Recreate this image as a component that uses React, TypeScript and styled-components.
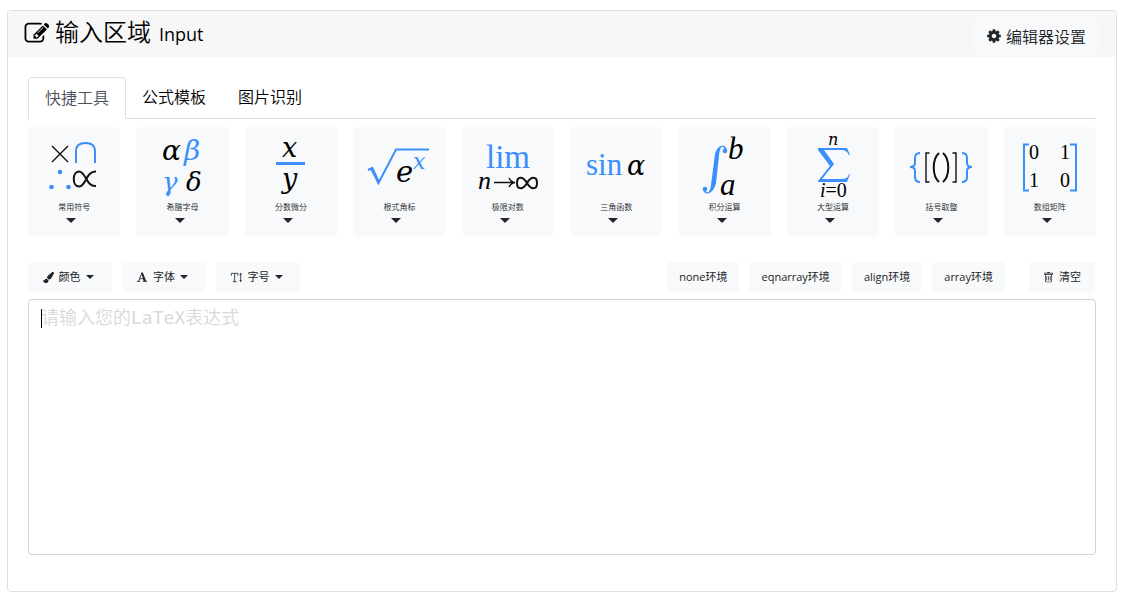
import React from 'react';
import styled, { createGlobalStyle } from 'styled-components';
import { FaPaintBrush } from 'react-icons/fa';
import { BsTrash } from 'react-icons/bs';

const blue = '#3b8ffb';

const GlobalStyle = createGlobalStyle`
  *, *::before, *::after { box-sizing: border-box; }
  body {
    margin: 0;
    padding: 10px 5px 8px 7px;
    background: #fff;
    color: #000;
    font-family: "Open Sans", "Noto Sans CJK SC", sans-serif;
    font-size: 16px;
    line-height: 24px;
  }
  button, textarea { font-family: inherit; }
`;

const Panel = styled.main`
  border: 1px solid #dfdfdf;
  border-radius: 4px;
  background: #fff;
`;

const PanelHeader = styled.header`
  display: flex;
  align-items: center;
  justify-content: space-between;
  height: 46px;
  padding: 0 16px;
  background: #f7f7f7;
`;

const Title = styled.h1`
  display: flex;
  align-items: baseline;
  gap: 8px;
  margin: 0 0 2px;
  font-size: 24px;
  font-weight: 350;
  line-height: 32px;

  svg { align-self: center; margin-right: -2px; }
  small { font-size: 18px; font-weight: 400; }
`;

const SettingsButton = styled.button`
  display: flex;
  align-items: center;
  gap: 4px;
  height: 38px;
  padding: 0 14px;
  border: 0;
  border-radius: 4px;
  background: #f8f9fa;
  color: #212529;
  font-size: 16px;
  font-weight: 350;
  margin-top: 4px;
`;

const PanelBody = styled.div`
  padding: 20px 20px 36px;
`;

const Tabs = styled.nav`
  display: flex;
  height: 42px;
  border-bottom: 1px solid #dee2e6;
`;

const Tab = styled.a<{ $active?: boolean }>`
  height: ${p => (p.$active ? 42 : 41)}px;
  padding: 8px 16px;
  border: ${p => (p.$active ? '1px solid #dee2e6' : '0')};
  border-bottom: 0;
  border-radius: 4px 4px 0 0;
  background: #fff;
  color: ${p => (p.$active ? '#495057' : '#000')};
  font-weight: 350;
  text-decoration: none;
`;

const ToolGrid = styled.div`
  display: grid;
  grid-template-columns: repeat(10, minmax(0, 1fr));
  gap: 16px;
  margin-top: 8px;
`;

const ToolCard = styled.button`
  display: flex;
  flex-direction: column;
  align-items: center;
  height: 109px;
  padding: 0;
  border: 0;
  border-radius: 4px;
  background: #f8f9fa;
  color: #212529;
  font-size: 8px;
  font-weight: 350;
  line-height: 12px;
`;

const Caret = styled.span<{ $size: number }>`
  border: ${p => p.$size}px solid transparent;
  border-top-color: #212529;
  border-bottom: 0;
`;

const CardCaret = styled(Caret)`
  margin: 5px 6px 0 0;
`;

const Toolbar = styled.div`
  display: flex;
  justify-content: space-between;
  margin-top: 26px;
  padding-right: 1px;
`;

const ButtonGroup = styled.div`
  display: flex;
  gap: 10px;
`;

const ToolButton = styled.button<{ $separate?: boolean }>`
  display: flex;
  align-items: center;
  justify-content: center;
  gap: 5px;
  height: 30px;
  padding: ${p => (p.$separate ? '0 14px' : '0 12px')};
  margin-left: ${p => (p.$separate ? '14px' : '0')};
  border: 0;
  border-radius: 4px;
  background: #f8f9fa;
  color: #212529;
  font-size: 11px;
  font-weight: 400;
  line-height: 20px;
  white-space: nowrap;
`;

const MenuButton = styled(ToolButton)`
  width: 84px;
  padding: 0 16px 0 12px;
`;

const Editor = styled.div`
  position: relative;
  margin-top: 7px;
`;

const Input = styled.textarea`
  display: block;
  width: 100%;
  height: 256px;
  padding: 5px 12px;
  border: 1px solid #ced4da;
  border-radius: 4px;
  outline: 0;
  resize: none;
  background: #fff;
  font-family: "DejaVu Sans Mono", "Noto Sans CJK SC", monospace;
  font-size: 18px;
  font-weight: 350;
  line-height: 26px;
  &::placeholder { color: #d9d9d9; opacity: 1; }
`;

const TextCursor = styled.span`
  position: absolute;
  left: 13px;
  top: 10px;
  width: 1px;
  height: 19px;
  background: #000;
`;

const EditIcon = () => (
  <svg width="25" height="25" viewBox="-40 0 1792 1792" aria-hidden="true">
    <path d="M888 1184l116-116-152-152-116 116v56h96v96h56zm440-720q-16-16-33 1l-350 350q-17 17-1 33t33-1l350-350q17-17 1-33zm80 594v190q0 119-84.5 203.5t-203.5 84.5h-832q-119 0-203.5-84.5t-84.5-203.5v-832q0-119 84.5-203.5t203.5-84.5h832q63 0 117 25 15 7 18 23 3 17-9 29l-49 49q-14 14-32 8-23-6-45-6h-832q-66 0-113 47t-47 113v832q0 66 47 113t113 47h832q66 0 113-47t47-113v-126q0-13 9-22l64-64q15-15 35-7t20 29zm-96-738l288 288-672 672h-288v-288zm444 132l-92 92-288-288 92-92q28-28 68-28t68 28l152 152q28 28 28 68t-28 68z" />
  </svg>
);

const GearIcon = () => (
  <svg width="16" height="16" viewBox="0 0 1792 1792" fill="currentColor" aria-hidden="true">
    <path d="M1152 896q0-106-75-181t-181-75-181 75-75 181 75 181 181 75 181-75 75-181zm512-109v222q0 12-8 23t-20 13l-185 28q-19 54-39 91 35 50 107 138 10 12 10 25t-9 23q-27 37-99 108t-94 71q-12 0-26-9l-138-108q-44 23-91 38-16 136-29 186-7 28-36 28h-222q-14 0-24.5-8.5t-11.5-21.5l-28-184q-49-16-90-37l-141 107q-10 9-25 9-14 0-25-11-126-114-165-168-7-10-7-23 0-12 8-23 15-21 51-66.5t54-70.5q-27-50-41-99l-183-27q-13-2-21-12.5t-8-23.5v-222q0-12 8-23t19-13l186-28q14-46 39-92-40-57-107-138-10-12-10-24 0-10 9-23 26-36 98.5-107.5t94.5-71.5q13 0 26 10l138 107q44-23 91-38 16-136 29-186 7-28 36-28h222q14 0 24.5 8.5t11.5 21.5l28 184q49 16 90 37l142-107q9-9 24-9 13 0 25 10 129 119 165 170 7 8 7 22 0 12-8 23-15 21-51 66.5t-54 70.5q26 50 41 98l183 28q13 2 21 12.5t8 23.5z" />
  </svg>
);

const FontIcon = () => (
  <svg width="12" height="12" viewBox="0 0 14 14" aria-hidden="true">
    <path d="M1 12H5M8 12H13M3 12L7 2L11 12M4 9H9" fill="none" stroke="#212529" strokeWidth="1" />
    <path d="M6 2H8L12 12H9Z" fill="#212529" />
  </svg>
);

const SizeIcon = () => (
  <svg width="13" height="13" viewBox="0 0 14 14" fill="none" stroke="#343a40" aria-hidden="true">
    <path d="M1.5 5V2.5H8.5V5M5 2.5V11.5M3 11.5H7M11.5 3V11" />
    <path d="M10 4L11.5 2L13 4ZM10 10L11.5 12L13 10Z" fill="#343a40" stroke="none" />
  </svg>
);

const Formula = styled.svg`
  flex: none;
  display: block;
  overflow: visible;
  font-family: "Liberation Serif", serif;
  font-weight: 400;
  .m { font-family: "DejaVu Serif", serif; font-style: italic; }
  .i { font-style: italic; }
  .b { fill: ${blue}; }
  .s { fill: none; stroke: #111; stroke-width: 2; }
  .t { fill: none; stroke: #111; stroke-width: 1.4; }
  .bs { fill: none; stroke: ${blue}; stroke-width: 2; }
`;

const tools: { label: string; art: React.ReactNode }[] = [
  { label: '常用符号', art: <>
    <path className="t" d="M24 19L40 35M40 19L24 35" />
    <path className="bs" d="M48 36V24Q48 16 57.5 16Q67 16 67 24V36" />
    <g className="b"><circle cx="32" cy="45" r="2.3" /><circle cx="23.5" cy="60" r="2.3" /><circle cx="40.5" cy="60" r="2.3" /></g>
    <path className="s" d="M68 44.5C58 44 58 59.5 51 59.5C44 59.5 44 44.5 51 44.5C58 44.5 58 60 68 59" />
  </> },
  { label: '希腊字母', art: <g className="m">
    <text x="25" y="33" fontSize="28">α</text><text className="b" x="47" y="33" fontSize="28">β</text>
    <text className="b" x="25" y="64" fontSize="26">γ</text><text x="49" y="64" fontSize="26">δ</text>
  </g> },
  { label: '分数微分', art: <g className="m" fontSize="27">
    <text x="37" y="30">x</text>
    <rect className="b" x="31" y="35" width="29" height="3" />
    <text x="37" y="61">y</text>
  </g> },
  { label: '根式角标', art: <>
    <path className="bs" d="M15 43L19 41L25.5 56L43 22.5H76" />
    <path className="b" d="M17 42L20 40L26 53L25 57Z" />
    <text className="m" x="43" y="55" fontSize="29">e</text>
    <text className="m b" x="60" y="42" fontSize="22">x</text>
  </> },
  { label: '极限对数', art: <>
    <text className="b" x="24" y="41" fontSize="33">lim</text>
    <text className="i" x="16" y="62" fontSize="26">n</text>
    <path className="t" d="M32 55.5H52M47 51Q49 55 53 55.5Q49 56 47 60" />
    <path className="s" d="M65 56C61 49 55 49 55 56C55 63 61 63 65 56C69 49 75 49 75 56C75 63 69 63 65 56Z" />
  </> },
  { label: '三角函数', art: <>
    <text className="b" x="16" y="48" fontSize="31">sin</text>
    <text className="m" x="57" y="48" fontSize="27">α</text>
  </> },
  { label: '积分运算', art: <>
    <path className="b" d="M48 24C48 17 39 16 36 27L32 58C31 66 28 67 26 63L24 61C24 69 34 69 37 56L40 29C41 18 44 18 46 23Z" />
    <circle className="b" cx="46" cy="24" r="2.3" /><circle className="b" cx="26" cy="62" r="2.3" />
    <text className="i" x="49" y="32" fontSize="31">b</text>
    <text className="i" x="41" y="68" fontSize="31">a</text>
  </> },
  { label: '大型运算', art: <>
    <text className="m" x="41" y="18" fontSize="16">n</text>
    <path className="b" d="M31 21H60L63 28H62C60 24 58 23 53 23H37L47 37L35 52H53C59 52 61 51 62 47H63L60 55H31V54L43 39L31 23Z" />
    <text x="33" y="70" fontSize="20"><tspan className="i">i</tspan>=0</text>
  </> },
  { label: '括号取整', art: <>
    <path className="bs" d="M25 26Q20 26 20 31V36Q20 40 15 40Q20 40 20 44V50Q20 55 25 55M67 26Q72 26 72 31V36Q72 40 77 40Q72 40 72 44V50Q72 55 67 55" />
    <path className="t" d="M34.5 26H31V55H34.5M57.5 26H61V55H57.5" />
    <path className="s" d="M44 26C37 32 37 49 44 55M48 26C55 32 55 49 48 55" />
  </> },
  { label: '数组矩阵', art: <>
    <path className="bs" d="M25 17.5H20V63.5H25M66 17.5H72V63.5H66" />
    <g fontSize="20"><text x="25" y="32">0</text><text x="56" y="32">1</text><text x="25" y="60">1</text><text x="56" y="60">0</text></g>
  </> },
];

export default function App() {
  return (
    <>
      <GlobalStyle />
      <Panel>
        <PanelHeader>
          <Title><EditIcon />输入区域 <small>Input</small></Title>
          <SettingsButton type="button"><GearIcon />编辑器设置</SettingsButton>
        </PanelHeader>
        <PanelBody>
          <Tabs>
            <Tab href="#tools" $active>快捷工具</Tab>
            <Tab href="#templates">公式模板</Tab>
            <Tab href="#ocr">图片识别</Tab>
          </Tabs>
          <ToolGrid>
            {tools.map(t => (
              <ToolCard type="button" key={t.label}>
                <Formula width="92" height="74" viewBox="0 0 92 74" aria-hidden="true">{t.art}</Formula>
                {t.label}
                <CardCaret $size={5} />
              </ToolCard>
            ))}
          </ToolGrid>
          <Toolbar>
            <ButtonGroup>
              <MenuButton type="button"><FaPaintBrush size={11} />颜色<Caret $size={4} /></MenuButton>
              <MenuButton type="button"><FontIcon />字体<Caret $size={4} /></MenuButton>
              <MenuButton type="button"><SizeIcon />字号<Caret $size={4} /></MenuButton>
            </ButtonGroup>
            <ButtonGroup>
              <ToolButton type="button">none环境</ToolButton>
              <ToolButton type="button">eqnarray环境</ToolButton>
              <ToolButton type="button">align环境</ToolButton>
              <ToolButton type="button">array环境</ToolButton>
              <ToolButton type="button" $separate><BsTrash size={11} />清空</ToolButton>
            </ButtonGroup>
          </Toolbar>
          <Editor>
            <Input aria-label="LaTeX" placeholder="请输入您的LaTeX表达式" spellCheck={false} />
            <TextCursor />
          </Editor>
        </PanelBody>
      </Panel>
    </>
  );
}
